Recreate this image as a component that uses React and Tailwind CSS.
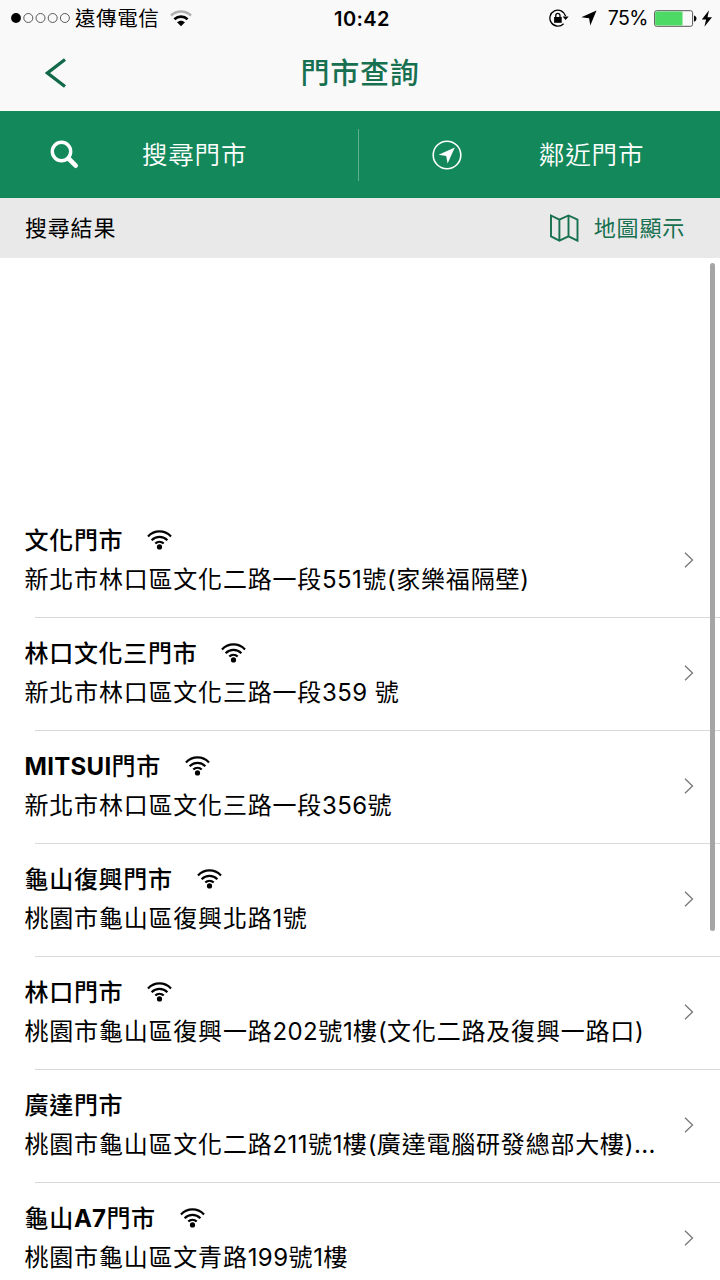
const stores = [
  { name: "文化門市", address: "新北市林口區文化二路一段551號(家樂福隔壁)", wifi: true },
  { name: "林口文化三門市", address: "新北市林口區文化三路一段359 號", wifi: true },
  { name: "MITSUI門市", address: "新北市林口區文化三路一段356號", wifi: true },
  { name: "龜山復興門市", address: "桃園市龜山區復興北路1號", wifi: true },
  { name: "林口門市", address: "桃園市龜山區復興一路202號1樓(文化二路及復興一路口)", wifi: true },
  { name: "廣達門市", address: "桃園市龜山區文化二路211號1樓(廣達電腦研發總部大樓)...", wifi: false },
  { name: "龜山A7門市", address: "桃園市龜山區文青路199號1樓", wifi: true },
]

// latin letters and digits are set tighter than the chinese text around them
function MixedText({ text, latinClass }) {
  return text.split(/([\x20-\x7e]+)/).map((part, i) =>
    i % 2 ? (
      <span key={i} className={latinClass}>
        {part}
      </span>
    ) : (
      part
    )
  )
}

function WifiIcon() {
  return (
    <svg width="25" height="20" viewBox="0 0 26 20" fill="none" stroke="#000" strokeWidth="2.3">
      <path d="M1 6.3C7.8-.6 18.2-.6 25 6.3" />
      <path d="M4.8 10.2c4.6-4.6 11.8-4.6 16.4 0" />
      <path d="M8.6 13.7c2.5-2.4 6.3-2.4 8.8 0" />
      <circle cx="13" cy="17.2" r="2.7" fill="#000" stroke="none" />
    </svg>
  )
}

function StatusBar() {
  return (
    <div className="flex h-9 items-center text-black">
      <div className="flex flex-1 items-center pl-[11px]">
        <svg width="60" height="12" viewBox="0 0 60 12" fill="none" stroke="#333" strokeWidth="0.8">
          <circle cx="5" cy="6" r="4.9" fill="#000" stroke="none" />
          <circle cx="17.3" cy="6" r="4.5" />
          <circle cx="29.5" cy="6" r="4.5" />
          <circle cx="41.7" cy="6" r="4.5" />
          <circle cx="53.9" cy="6" r="4.5" />
        </svg>
        <span className="ml-1 pt-0.5 text-[20.5px] tracking-[0.6px]">遠傳電信</span>
        <svg className="ml-[11px]" width="22" height="17" viewBox="0 0 22 17" fill="none" strokeWidth="2.6">
          <path d="M1 5.5C6.8.1 15.2.1 21 5.5" stroke="#b0b0b0" />
          <path d="M4.4 9.2c3.8-3.5 9.4-3.5 13.2 0" stroke="#000" />
          <path d="M11 16.2l-4-4c2.4-2.1 5.6-2.1 8 0z" fill="#000" />
        </svg>
      </div>
      <span className="pt-px text-[20px] font-semibold tracking-[0.4px]">10:42</span>
      <div className="flex flex-1 items-center justify-end pr-[7px]">
        <svg width="20" height="18" viewBox="0 0 20 18" fill="none">
          <path d="M16.6 7A8 8 0 1 0 14.6 14.7" stroke="#000" strokeWidth="1.3" />
          <path d="M13.6 7.4h6l-3 3.7z" fill="#000" />
          <path d="M5.1 8h7.6v5.8H5.1z" fill="#000" />
          <path d="M6.8 8.5V6.5a2.1 2.1 0 0 1 4.2 0v2" stroke="#000" strokeWidth="1.3" />
        </svg>
        <svg className="ml-3" width="16" height="16" viewBox="0 0 16 16">
          <path d="M15.5.5 9.3 15.5 8.1 8.2.3 7.2z" fill="#000" />
        </svg>
        <span className="ml-[11px] pt-px text-[19.5px] tracking-[-0.5px]">75%</span>
        <svg className="ml-[6px]" width="43" height="17" viewBox="0 0 43 17">
          <rect x=".6" y=".7" width="38" height="15.6" rx="2" fill="none" stroke="#555" strokeWidth="1" />
          <rect x="1.2" y="1.4" width="27.3" height="14.2" rx="1" fill="#4cd964" />
          <path d="M40 5.4c3.3.6 3.3 5.6 0 6.2z" fill="#000" />
        </svg>
        <svg className="ml-[4px]" width="12" height="17" viewBox="0 0 12 17">
          <path d="M8 .3.8 9.5h4.3L3.4 16.8 11 7.2H6.5z" fill="#000" />
        </svg>
      </div>
    </div>
  )
}

function StoreRow({ store }) {
  return (
    <li>
      <div className="flex h-28 items-center pr-[26px] pb-[3px] pl-[24.5px]">
        <div className="flex-1 whitespace-nowrap">
          <div className="flex items-center leading-[39px]">
            <span className="text-[24px] font-medium tracking-[0.7px]">
              <MixedText text={store.name} latinClass="text-[24px] font-bold tracking-[0.3px]" />
            </span>
            {store.wifi && (
              <span className="ml-6">
                <WifiIcon />
              </span>
            )}
          </div>
          <div className="text-[24px] leading-[39px] tracking-[0.8px]">
            <MixedText text={store.address} latinClass="tracking-[0.4px]" />
          </div>
        </div>
        <svg width="10" height="16" viewBox="0 0 10 16" fill="none" stroke="#777" strokeWidth="1.3">
          <path d="M1 .8 8.5 8 1 15.2" />
        </svg>
      </div>
      <div className="ml-[35px] h-px bg-[#d9d9d9]" />
    </li>
  )
}

export default function App() {
  return (
    <div className="relative flex h-[1280px] w-[720px] flex-col overflow-hidden bg-white font-['Inter','Noto_Sans_CJK_TC',sans-serif] text-black">
      <header className="h-[111px] shrink-0 bg-[#f9f9f9]">
        <StatusBar />
        <div className="flex h-[75px] items-center px-[45px]">
          <div className="flex-1">
            <svg className="-mt-0.5" width="22" height="30" viewBox="0 0 22 30" fill="none" stroke="#11694a" strokeWidth="3.3">
              <path d="M20 1.5 2.5 15 20 28.5" />
            </svg>
          </div>
          <h1 className="pt-px text-[29px] font-medium tracking-[0.7px] text-[#17704f]">門市查詢</h1>
          <div className="flex-1" />
        </div>
      </header>

      <nav className="flex h-[87px] shrink-0 items-center bg-[#13885b] text-white">
        <button className="flex h-full w-[358px] items-center pl-[50px]">
          <svg width="29" height="29" viewBox="0 0 29 29" fill="none" stroke="#fff">
            <circle cx="11.5" cy="11.5" r="9.2" strokeWidth="3.4" />
            <path d="m18.5 18.5 7.2 7.2" strokeWidth="4.6" strokeLinecap="round" />
          </svg>
          <span className="ml-[63px] pt-0.5 text-[25.5px] font-[350] tracking-[0.8px]">搜尋門市</span>
        </button>
        <div className="h-[52px] w-px bg-[#5fae8f]" />
        <button className="flex h-full flex-1 items-center pl-[73px]">
          <svg width="30" height="30" viewBox="0 0 30 30">
            <circle cx="15" cy="15" r="13.8" fill="none" stroke="#fff" strokeWidth="1.6" />
            <path d="M22.8 7.5 15.6 23.6 14.2 16 6.6 14.7z" fill="#fff" />
          </svg>
          <span className="ml-[77px] pt-0.5 text-[25.5px] font-[350] tracking-[0.8px]">鄰近門市</span>
        </button>
      </nav>

      <div className="flex h-[60px] shrink-0 items-center justify-between bg-[#e9e9e9] pr-[35px] pl-[25px] text-[22px] tracking-[0.8px]">
        <span>搜尋結果</span>
        <button className="flex items-center text-[#17704f]">
          <svg width="30" height="28" viewBox="0 0 30 28" fill="none" stroke="#17704f" strokeWidth="1.9">
            <path d="M1 1.5 9.4 5.7 18.5 1.5l9 4.2v21L18.5 22.4l-9.1 4.2L1 22.4zM9.4 5.7v20.9M18.5 1.5v20.9" />
          </svg>
          <span className="ml-[14px]">地圖顯示</span>
        </button>
      </div>

      <ul className="pt-[247px]">
        {stores.map((store) => (
          <StoreRow key={store.name} store={store} />
        ))}
      </ul>

      {/* scroll indicator */}
      <div className="absolute top-[263px] right-[5px] h-[668px] w-[5px] rounded-full bg-[#a5a5a5]" />
    </div>
  )
}
